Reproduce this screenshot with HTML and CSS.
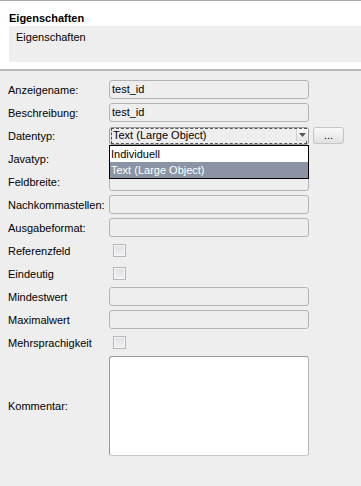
FILE: index.html
```html
<!DOCTYPE html>
<html>
<head>
<meta charset="utf-8">
<link rel="stylesheet" href="styles.css">
</head>
<body>
<div class="header">
  <div class="title">Eigenschaften</div>
  <div class="desc">Eigenschaften</div>
</div>
<div class="panel">
  <div class="form">
    <div class="label">Anzeigename:</div>
    <div class="ctl"><div class="input">test_id</div></div>

    <div class="label">Beschreibung:</div>
    <div class="ctl"><div class="input">test_id</div></div>

    <div class="label">Datentyp:</div>
    <div class="ctl select-row">
      <div class="select">
        <div class="focus">Text (Large Object)</div>
        <div class="arrow"><svg width="7" height="4" viewBox="0 0 7 4"><path d="M0 0h7L3.5 4z" fill="#555"/></svg></div>
      </div>
      <div class="btn">...</div>
      <div class="dropdown">
        <div class="opt">Individuell</div>
        <div class="opt sel">Text (Large Object)</div>
      </div>
    </div>

    <div class="label">Javatyp:</div>
    <div class="ctl"><div class="input"></div></div>

    <div class="label">Feldbreite:</div>
    <div class="ctl"><div class="input"></div></div>

    <div class="label">Nachkommastellen:</div>
    <div class="ctl"><div class="input"></div></div>

    <div class="label">Ausgabeformat:</div>
    <div class="ctl"><div class="input"></div></div>

    <div class="label">Referenzfeld</div>
    <div class="ctl"><div class="check"></div></div>

    <div class="label">Eindeutig</div>
    <div class="ctl"><div class="check"></div></div>

    <div class="label">Mindestwert</div>
    <div class="ctl"><div class="input"></div></div>

    <div class="label">Maximalwert</div>
    <div class="ctl"><div class="input"></div></div>

    <div class="label">Mehrsprachigkeit</div>
    <div class="ctl"><div class="check"></div></div>

    <div class="label tall">Kommentar:</div>
    <div class="ctl tall"><div class="textarea"></div></div>
  </div>
</div>
</body>
</html>
```

FILE: styles.css
```css
html, body {
  margin: 0;
  padding: 0;
}
body {
  font-family: "Liberation Sans", Arial, sans-serif;
  font-size: 11px;
  color: #000;
  background: #eeeeee;
  width: 361px;
  height: 486px;
  overflow: hidden;
}
.header {
  width: 361px;
  box-sizing: border-box;
  background: #fff;
  border-top: 1px solid #a8a8a8;
  border-bottom: 2px solid #b8b8b8;
  padding: 10px 0 7px 9px;
}
.title {
  font-weight: bold;
  font-size: 11px;
  line-height: 15px;
}
.desc {
  background: #eeeeee;
  height: 36px;
  padding: 4px 0 0 7px;
  box-sizing: border-box;
  line-height: 14px;
}
.panel {
  padding: 9px 0 0 8px;
}
.form {
  display: grid;
  grid-template-columns: 101px 236px;
  grid-auto-rows: 19px;
  row-gap: 4px;
}
.label {
  display: flex;
  align-items: center;
  white-space: nowrap;
}
.ctl {
  display: flex;
  align-items: center;
}
.tall {
  height: 100px;
}
.input {
  width: 200px;
  height: 19px;
  box-sizing: border-box;
  border: 1px solid #b4b4b8;
  border-radius: 3px;
  background: #eeeeee;
  padding-left: 2px;
  line-height: 17px;
}
.select-row {
  position: relative;
  gap: 4px;
}
.select {
  width: 200px;
  height: 18px;
  box-sizing: border-box;
  border: 1px solid #9c9ca0;
  border-radius: 3px;
  background: #eeeeee;
  display: flex;
  align-items: center;
  padding: 1px;
}
.focus {
  flex: 1;
  height: 14px;
  border: 1px dashed #555;
  line-height: 13px;
  padding-left: 1px;
  white-space: nowrap;
}
.arrow {
  position: absolute;
  left: 187px;
  top: 3px;
  width: 11px;
  height: 12px;
  background: linear-gradient(#fbfbfb, #e4e4e4);
  border-left: 1px solid #d0d0d0;
  display: flex;
  align-items: center;
  justify-content: center;
}
.btn {
  width: 31px;
  height: 17px;
  box-sizing: border-box;
  border: 1px solid #c4c4c4;
  border-radius: 3px;
  background: linear-gradient(#f8f8f8, #e2e2e2);
  display: flex;
  align-items: center;
  justify-content: center;
  line-height: 10px;
  padding-bottom: 2px;
}
.dropdown {
  position: absolute;
  left: 0;
  top: 19px;
  width: 200px;
  box-sizing: border-box;
  border: 1px solid #000;
  background: #fff;
  z-index: 2;
}
.opt {
  height: 16px;
  line-height: 16px;
  padding-left: 1px;
}
.opt.sel {
  background: #8a94a5;
  color: #fff;
}
.check {
  margin-left: 4px;
  width: 13px;
  height: 13px;
  box-sizing: border-box;
  border: 1px solid #b6b6b6;
  background: linear-gradient(#dfe2e6, #eef0f2);
  box-shadow: inset 0 0 0 1px #f6f6f6;
}
.textarea {
  width: 200px;
  height: 100px;
  box-sizing: border-box;
  border: 1px solid #9a9a9e;
  border-bottom-color: #c8c8c8;
  border-right-color: #b8b8b8;
  border-radius: 3px;
  background: #fff;
}
```
